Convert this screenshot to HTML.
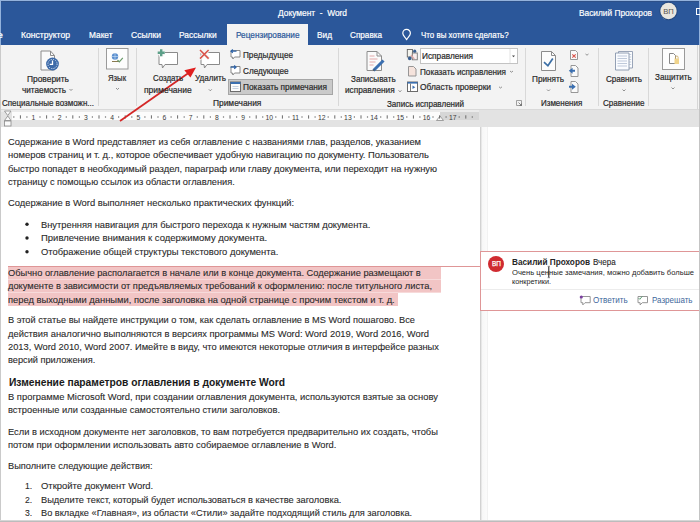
<!DOCTYPE html>
<html><head><meta charset="utf-8">
<style>
*{margin:0;padding:0;box-sizing:border-box}
html,body{width:700px;height:522px;overflow:hidden;background:#fff;font-family:"Liberation Sans",sans-serif}
.a{position:absolute}
.t{position:absolute;white-space:pre;line-height:normal;transform-origin:0 0;font-family:"Liberation Sans",sans-serif}
svg{position:absolute;overflow:visible}
</style></head><body>
<!-- title bar -->
<div class="a" style="left:0;top:0;width:700px;height:45px;background:#2b579a"></div>
<div class="a" style="left:0;top:0;width:700px;height:1px;background:#93b2dc"></div>
<div class="a" style="left:0;top:1px;width:700px;height:1px;background:#2d5088"></div>
<!-- active tab -->
<div class="a" style="left:227px;top:24px;width:81px;height:22px;background:#f3f3f3"></div>
<!-- ribbon -->
<div class="a" style="left:0;top:45px;width:700px;height:64px;background:#f3f3f3"></div>
<div class="a" style="left:0;top:109px;width:700px;height:1px;background:#d9d9d9"></div>
<!-- show comments button -->
<div class="a" style="left:228px;top:79px;width:105px;height:16px;background:#cacaca;border:1px solid #a6a6a6"></div>
<!-- separators -->
<div class="a" style="left:697px;top:45px;width:1px;height:64px;background:#d6d6d6"></div>
<div class="a" style="left:98px;top:48px;width:1px;height:58px;background:#d8d8d8"></div>
<div class="a" style="left:136px;top:48px;width:1px;height:58px;background:#d8d8d8"></div>
<div class="a" style="left:338px;top:48px;width:1px;height:58px;background:#d8d8d8"></div>
<div class="a" style="left:525px;top:48px;width:1px;height:58px;background:#d8d8d8"></div>
<div class="a" style="left:598px;top:48px;width:1px;height:58px;background:#d8d8d8"></div>
<div class="a" style="left:648px;top:48px;width:1px;height:58px;background:#d8d8d8"></div>
<!-- ruler -->
<div class="a" style="left:0;top:110px;width:700px;height:17px;background:#e3e3e3"></div>
<div class="a" style="left:0;top:110px;width:479px;height:2px;background:#ebebeb"></div>
<div class="a" style="left:12px;top:112px;width:428px;height:8px;background:#fcfcfc"></div>
<div class="a" style="left:440px;top:112px;width:39px;height:8px;background:#d6d6d6"></div>
<!-- doc -->
<div class="a" style="left:0;top:127px;width:700px;height:395px;background:#fff"></div>
<div class="a" style="left:480px;top:127px;width:8px;height:395px;background:linear-gradient(to right,#d2d2d2 0px,#d2d2d2 1px,#e8e8e8 1px,#e8e8e8 2px,#f7f7f7 2px,#fbfbfb 7px,#f2f2f2 7px,#f2f2f2 8px)"></div>
<!-- highlight -->
<div class="a" style="left:8px;top:267px;width:433px;height:12px;background:#f2c5c5"></div>
<div class="a" style="left:8px;top:279px;width:433px;height:1px;background:#f7dada"></div>
<div class="a" style="left:8px;top:280px;width:433px;height:12px;background:#f2c5c5"></div>
<div class="a" style="left:8px;top:292px;width:433px;height:1px;background:#f7dada"></div>
<div class="a" style="left:8px;top:293px;width:390px;height:13px;background:#f2c5c5"></div>
<div class="a" style="left:8px;top:266px;width:473px;height:1px;background:#df9697"></div>
<!-- comment box -->
<div class="a" style="left:480px;top:251px;width:222px;height:60px;background:#fff;border:1px solid #df9697"></div>
<div class="a" style="left:481px;top:289px;width:219px;height:1px;background:#ececec"></div>
<div class="a" style="left:488.2px;top:255.7px;width:16px;height:16px;border-radius:50%;background:#d02b30"></div>

<!-- avatar title -->
<div class="a" style="left:660px;top:4px;width:16px;height:16px;border-radius:50%;background:#dedede"></div>
<!-- borders -->
<div class="a" style="left:0;top:0;width:1px;height:45px;background:#93b2dc"></div>
<div class="a" style="left:0;top:45px;width:1px;height:477px;background:#cacaca"></div>
<div class="a" style="left:699px;top:0;width:1px;height:45px;background:#93b2dc"></div>
<div class="a" style="left:699px;top:45px;width:1px;height:477px;background:#c4c4c4"></div>
<div class="a" style="left:0;top:520px;width:700px;height:1px;background:#d6d6d6"></div>
<div class="a" style="left:0;top:521px;width:700px;height:1px;background:#bcbcbc"></div>
<svg width="700" height="522" viewBox="0 0 700 522" style="left:0;top:0">
<!-- title avatar -->
<circle cx="668.5" cy="11" r="9.2" fill="#24487f"/>
<circle cx="668.5" cy="11" r="8.2" fill="#e9e6df"/>
<text x="668.5" y="14" font-size="7.6" text-anchor="middle" fill="#55534e" font-family="Liberation Sans" style="-webkit-text-stroke:0.3px #55534e">ВП</text>
<!-- ribbon display icon at right edge -->
<rect x="696.5" y="8.5" width="5" height="6" fill="none" stroke="#ffffff" stroke-width="1"/>
<!-- lightbulb -->
<path d="M406.6 39.6 C405.2 37 402.8 35.8 402.8 33.2 A3.8 3.8 0 0 1 410.4 33.2 C410.4 35.8 408 37 406.6 39.6z" fill="none" stroke="#fff" stroke-width="1.2" stroke-linejoin="round"/>
<!-- Проверить читаемость: doc + blue circle -->
<path d="M41 51 h9.5 l4 4.5 v14.5 h-13.5z" fill="#fafafa" stroke="#8c8c8c" stroke-width="1"/>
<path d="M50.5 51 v4.5 h4" fill="none" stroke="#8c8c8c" stroke-width="1"/>
<circle cx="52.5" cy="64" r="6.4" fill="#3d6aa8"/>
<circle cx="52.5" cy="64" r="4.6" fill="none" stroke="#cfe0f3" stroke-width="1" stroke-dasharray="1.2 1.2"/>
<path d="M52.5 60.5 v3.8 h-2.8" fill="none" stroke="#ffffff" stroke-width="1.3"/>
<!-- chevron -->
<path d="M69.5 89 l1.5 1.5 l1.5 -1.5" fill="none" stroke="#777" stroke-width="0.8"/>

<!-- Язык -->
<rect x="106.5" y="48.5" width="21.5" height="20.5" fill="#fdfdfd" stroke="#9a9a9a" stroke-width="1"/>
<circle cx="115" cy="56.5" r="3.2" fill="#5b8fcf"/>
<path d="M112 56.5 h6 M115 53.3 v6.4" stroke="#cfe1f5" stroke-width="0.6"/>
<path d="M112 61.5 h8" stroke="#8a7a50" stroke-width="1"/>
<path d="M117.5 60 l1.8 1.8 l3.5 -4" fill="none" stroke="#6a9a6a" stroke-width="1.2"/>
<path d="M116 88 l1.5 1.5 l1.5 -1.5" fill="none" stroke="#777" stroke-width="0.8"/>

<!-- Создать примечание -->
<path d="M159 52.5 h18.5 v12 h-12.5 l-2.5 3.5 l-0.5 -3.5 h-3z" fill="#ffffff" stroke="#8a8a8a" stroke-width="1"/>
<path d="M161.2 49 v7.5 M157.5 52.7 h7.5" stroke="#f3f3f3" stroke-width="4.5"/>
<path d="M161.2 49.3 v7 M157.7 52.8 h7" stroke="#5c9f88" stroke-width="2.4"/>

<!-- Удалить -->
<path d="M201 52.5 h18.5 v12 h-12.5 l-2.5 3.5 l-0.5 -3.5 h-3z" fill="#ffffff" stroke="#8a8a8a" stroke-width="1"/>
<path d="M199.5 49.5 l9.5 9.5 M209 49.5 l-9.5 9.5" stroke="#f3f3f3" stroke-width="3.5"/>
<path d="M200 50 l8.6 8.6 M208.6 50 l-8.6 8.6" stroke="#d9534a" stroke-width="1.5"/>
<path d="M208.8 89.3 l1.5 1.5 l1.5 -1.5" fill="none" stroke="#777" stroke-width="0.8"/>

<!-- Предыдущее -->
<path d="M231 50.5 h9 v6.5 h-5.5 l-1.6 2 l-0.4 -2 h-1.5z" fill="#fff" stroke="#7d7d7d" stroke-width="0.9"/>
<path d="M236.5 51.2 h-5.5 M232.8 49.5 l-1.8 1.7 l1.8 1.7" fill="none" stroke="#2f64a8" stroke-width="1.2"/>
<!-- Следующее -->
<path d="M231 66.5 h9 v6.5 h-5.5 l-1.6 2 l-0.4 -2 h-1.5z" fill="#fff" stroke="#7d7d7d" stroke-width="0.9"/>
<path d="M230.5 67.2 h5.5 M234.2 65.5 l1.8 1.7 l-1.8 1.7" fill="none" stroke="#2f64a8" stroke-width="1.2"/>

<!-- Показать примечания icon -->
<rect x="230.5" y="82" width="10" height="9.5" fill="#fbfbfb" stroke="#6b6b6b" stroke-width="1"/>
<rect x="230.5" y="82" width="10" height="2" fill="#3b6fb0"/>
<path d="M232.5 86.5 h6 M232.5 88.5 h6" stroke="#b8c6da" stroke-width="0.8"/>
<!-- Записывать исправления -->
<path d="M367 51.5 h10 l4.5 4.5 v14.5 h-14.5z" fill="#fbfbfb" stroke="#8c8c8c" stroke-width="1"/>
<path d="M377 51.5 v4.5 h4.5" fill="none" stroke="#8c8c8c" stroke-width="1"/>
<path d="M369.5 56 h5 M369.5 59 h8 M369.5 62 h6 M369.5 65 h4" stroke="#e0a0a0" stroke-width="0.9"/>
<path d="M373.5 70.5 l10 -10" stroke="#3b6fb0" stroke-width="3"/>
<path d="M372.8 71.3 l1.2 -2.4 l1.2 1.2z" fill="#555"/>
<path d="M398.5 90.5 l1.5 1.2 l1.5 -1.2" fill="none" stroke="#777" stroke-width="0.8"/>

<!-- small icon 1 (display for review) -->
<rect x="407.3" y="49.5" width="5.2" height="7.5" fill="#f4f4ee" stroke="#666" stroke-width="0.9"/>
<rect x="412.3" y="53" width="5" height="6.8" fill="#f8eeee" stroke="#777" stroke-width="0.9"/>
<path d="M411 55 l3.3 4" stroke="#e0a8a8" stroke-width="1.2"/>
<circle cx="414.7" cy="51.2" r="1.6" fill="#3a5f90"/>
<circle cx="409.7" cy="58.4" r="1.8" fill="#3a5f90"/>
<!-- dropdown -->
<rect x="420.5" y="48.5" width="97" height="15" fill="#ffffff" stroke="#c3c3c3" stroke-width="1"/>
<rect x="509.5" y="49" width="1" height="14" fill="#e3e3e3"/>
<path d="M512 55.5 h3 l-1.5 1.7z" fill="#444"/>
<!-- small icon 2 -->
<path d="M408.5 66.5 h5 l2.5 2.5 v7 h-7.5z" fill="#f5e3dc" stroke="#8c8c8c" stroke-width="0.9"/>
<path d="M510 71 l1.5 1.2 l1.5 -1.2" fill="none" stroke="#777" stroke-width="0.8"/>
<!-- small icon 3 -->
<rect x="407.5" y="82" width="10" height="9.5" fill="#fff" stroke="#6b6b6b" stroke-width="1"/>
<rect x="407.5" y="82" width="10" height="1.6" fill="#3b6fb0"/>
<path d="M410.5 83.5 v8" stroke="#6b6b6b" stroke-width="0.9"/>
<path d="M412.5 85.5 l2.8 1.8 l-2.8 1.8z" fill="#3b6fb0"/>
<path d="M499 86.8 l1.5 1.2 l1.5 -1.2" fill="none" stroke="#777" stroke-width="0.8"/>
<!-- dialog launcher -->
<path d="M516.5 100.5 h5 v5 h-5z" fill="none" stroke="#8a8a8a" stroke-width="0.8"/>
<path d="M518.5 102.5 l3 3 M519.5 105.5 h2 v-2" fill="none" stroke="#6a6a6a" stroke-width="0.8"/>

<!-- Принять -->
<path d="M541.5 51.5 h10 l4 4 v15 h-14z" fill="#fcfcfc" stroke="#8c8c8c" stroke-width="1"/>
<path d="M551.5 51.5 v4 h4" fill="none" stroke="#8c8c8c" stroke-width="1"/>
<path d="M544 62.2 l3.9 3.6 l4.9 -7.2" fill="none" stroke="#3b6ea5" stroke-width="1.7"/>
<path d="M547 89.5 l1.5 1.5 l1.5 -1.5" fill="none" stroke="#777" stroke-width="0.8"/>
<!-- small: reject -->
<path d="M570.5 50.5 h5 l2 2 v7 h-7z" fill="#fafafa" stroke="#8c8c8c" stroke-width="0.9"/>
<path d="M572.3 54.3 l3.4 3.4 M575.7 54.3 l-3.4 3.4" stroke="#d9534a" stroke-width="1.1"/>
<path d="M585.5 54 l1.5 1.2 l1.5 -1.2" fill="none" stroke="#777" stroke-width="0.8"/>
<!-- small: prev change -->
<path d="M571 65.5 h4.5 l2.5 2.5 v8.5 h-7z" fill="#fafafa" stroke="#8c8c8c" stroke-width="0.9"/>
<path d="M568.8 70.8 L572.6 67.8 V69.8 H575 V71.8 H572.6 V73.8z" fill="#3b6fb0"/>
<!-- small: next change -->
<path d="M571 81.5 h4.5 l2.5 2.5 v8.5 h-7z" fill="#fafafa" stroke="#8c8c8c" stroke-width="0.9"/>
<path d="M575.8 86.8 L572 83.8 V85.8 H569 V87.8 H572 V89.8z" fill="#3b6fb0"/>

<!-- Сравнить -->
<path d="M618.5 51.5 h14 v16.5 h-14z" fill="#fbfcfe" stroke="#8f9bb0" stroke-width="0.9"/>
<path d="M629.2 54.5 h2 M629.2 57 h2 M629.2 59.5 h2 M629.2 62 h2 M629.2 64.5 h2" stroke="#9fb0c8" stroke-width="0.6"/>
<path d="M615.5 53 h13.5 v17 h-13.5z" fill="#fafcff" stroke="#8795ab" stroke-width="0.9"/>
<path d="M617.5 56 h9.5 M617.5 58.5 h9.5 M617.5 61 h9.5 M617.5 63.5 h9.5 M617.5 66 h9.5" stroke="#a3b3ca" stroke-width="0.7"/>
<path d="M622.5 89.5 l1.5 1.5 l1.5 -1.5" fill="none" stroke="#777" stroke-width="0.8"/>

<!-- Защитить -->
<rect x="662.5" y="48.5" width="22" height="21" fill="#fdfdfd" stroke="#9a9a9a" stroke-width="1"/>
<path d="M669.5 53.5 h4 l2 2 v8 h-6z" fill="#fff" stroke="#7a7a7a" stroke-width="0.9"/>
<rect x="674.5" y="58.5" width="4.5" height="5.5" fill="#f0d48c"/>
<path d="M675.5 58.5 v-1.2 a1.3 1.3 0 0 1 2.6 0 v1.2" fill="none" stroke="#c8a45c" stroke-width="0.8"/>
<path d="M671.5 87.5 l1.5 1.5 l1.5 -1.5" fill="none" stroke="#777" stroke-width="0.8"/>

<!-- ruler indent markers -->
<path d="M4.5 111 h6.5 l-3.25 4.5z M4.5 120.5 h6.5 l-3.25 -4.5z" fill="#fafafa" stroke="#8a8a8a" stroke-width="0.8"/>
<rect x="4.5" y="121" width="6.5" height="5" fill="#fafafa" stroke="#8a8a8a" stroke-width="0.8"/>
<path d="M436.5 120.5 h7 l-3.5 -4.5z" fill="#fafafa" stroke="#8a8a8a" stroke-width="0.8"/>
<rect x="13.2" y="116.4" width="1.2" height="1.2" fill="#6a6a6a"/>
<rect x="19.9" y="115.3" width="1" height="3.3" fill="#6a6a6a"/>
<rect x="26.3" y="116.4" width="1.2" height="1.2" fill="#6a6a6a"/>
<text x="33.5" y="119.8" font-size="6.8" text-anchor="middle" fill="#3a3a3a" font-family="Liberation Sans" style="-webkit-text-stroke:0.2px #3a3a3a">1</text>
<rect x="39.4" y="116.4" width="1.2" height="1.2" fill="#6a6a6a"/>
<rect x="46.1" y="115.3" width="1" height="3.3" fill="#6a6a6a"/>
<rect x="52.5" y="116.4" width="1.2" height="1.2" fill="#6a6a6a"/>
<text x="59.7" y="119.8" font-size="6.8" text-anchor="middle" fill="#3a3a3a" font-family="Liberation Sans" style="-webkit-text-stroke:0.2px #3a3a3a">2</text>
<rect x="65.7" y="116.4" width="1.2" height="1.2" fill="#6a6a6a"/>
<rect x="72.3" y="115.3" width="1" height="3.3" fill="#6a6a6a"/>
<rect x="78.8" y="116.4" width="1.2" height="1.2" fill="#6a6a6a"/>
<text x="85.9" y="119.8" font-size="6.8" text-anchor="middle" fill="#3a3a3a" font-family="Liberation Sans" style="-webkit-text-stroke:0.2px #3a3a3a">3</text>
<rect x="91.8" y="116.4" width="1.2" height="1.2" fill="#6a6a6a"/>
<rect x="98.5" y="115.3" width="1" height="3.3" fill="#6a6a6a"/>
<rect x="104.9" y="116.4" width="1.2" height="1.2" fill="#6a6a6a"/>
<text x="112.1" y="119.8" font-size="6.8" text-anchor="middle" fill="#3a3a3a" font-family="Liberation Sans" style="-webkit-text-stroke:0.2px #3a3a3a">4</text>
<rect x="118.0" y="116.4" width="1.2" height="1.2" fill="#6a6a6a"/>
<rect x="124.7" y="115.3" width="1" height="3.3" fill="#6a6a6a"/>
<rect x="131.2" y="116.4" width="1.2" height="1.2" fill="#6a6a6a"/>
<text x="138.3" y="119.8" font-size="6.8" text-anchor="middle" fill="#3a3a3a" font-family="Liberation Sans" style="-webkit-text-stroke:0.2px #3a3a3a">5</text>
<rect x="144.3" y="116.4" width="1.2" height="1.2" fill="#6a6a6a"/>
<rect x="150.9" y="115.3" width="1" height="3.3" fill="#6a6a6a"/>
<rect x="157.4" y="116.4" width="1.2" height="1.2" fill="#6a6a6a"/>
<text x="164.5" y="119.8" font-size="6.8" text-anchor="middle" fill="#3a3a3a" font-family="Liberation Sans" style="-webkit-text-stroke:0.2px #3a3a3a">6</text>
<rect x="170.5" y="116.4" width="1.2" height="1.2" fill="#6a6a6a"/>
<rect x="177.1" y="115.3" width="1" height="3.3" fill="#6a6a6a"/>
<rect x="183.6" y="116.4" width="1.2" height="1.2" fill="#6a6a6a"/>
<text x="190.7" y="119.8" font-size="6.8" text-anchor="middle" fill="#3a3a3a" font-family="Liberation Sans" style="-webkit-text-stroke:0.2px #3a3a3a">7</text>
<rect x="196.7" y="116.4" width="1.2" height="1.2" fill="#6a6a6a"/>
<rect x="203.3" y="115.3" width="1" height="3.3" fill="#6a6a6a"/>
<rect x="209.8" y="116.4" width="1.2" height="1.2" fill="#6a6a6a"/>
<text x="216.9" y="119.8" font-size="6.8" text-anchor="middle" fill="#3a3a3a" font-family="Liberation Sans" style="-webkit-text-stroke:0.2px #3a3a3a">8</text>
<rect x="222.9" y="116.4" width="1.2" height="1.2" fill="#6a6a6a"/>
<rect x="229.5" y="115.3" width="1" height="3.3" fill="#6a6a6a"/>
<rect x="236.0" y="116.4" width="1.2" height="1.2" fill="#6a6a6a"/>
<text x="243.1" y="119.8" font-size="6.8" text-anchor="middle" fill="#3a3a3a" font-family="Liberation Sans" style="-webkit-text-stroke:0.2px #3a3a3a">9</text>
<rect x="249.1" y="116.4" width="1.2" height="1.2" fill="#6a6a6a"/>
<rect x="255.7" y="115.3" width="1" height="3.3" fill="#6a6a6a"/>
<rect x="262.1" y="116.4" width="1.2" height="1.2" fill="#6a6a6a"/>
<text x="269.3" y="119.8" font-size="6.8" text-anchor="middle" fill="#3a3a3a" font-family="Liberation Sans" style="-webkit-text-stroke:0.2px #3a3a3a">10</text>
<rect x="275.2" y="116.4" width="1.2" height="1.2" fill="#6a6a6a"/>
<rect x="281.9" y="115.3" width="1" height="3.3" fill="#6a6a6a"/>
<rect x="288.3" y="116.4" width="1.2" height="1.2" fill="#6a6a6a"/>
<text x="295.5" y="119.8" font-size="6.8" text-anchor="middle" fill="#3a3a3a" font-family="Liberation Sans" style="-webkit-text-stroke:0.2px #3a3a3a">11</text>
<rect x="301.4" y="116.4" width="1.2" height="1.2" fill="#6a6a6a"/>
<rect x="308.1" y="115.3" width="1" height="3.3" fill="#6a6a6a"/>
<rect x="314.5" y="116.4" width="1.2" height="1.2" fill="#6a6a6a"/>
<text x="321.7" y="119.8" font-size="6.8" text-anchor="middle" fill="#3a3a3a" font-family="Liberation Sans" style="-webkit-text-stroke:0.2px #3a3a3a">12</text>
<rect x="327.6" y="116.4" width="1.2" height="1.2" fill="#6a6a6a"/>
<rect x="334.3" y="115.3" width="1" height="3.3" fill="#6a6a6a"/>
<rect x="340.7" y="116.4" width="1.2" height="1.2" fill="#6a6a6a"/>
<text x="347.9" y="119.8" font-size="6.8" text-anchor="middle" fill="#3a3a3a" font-family="Liberation Sans" style="-webkit-text-stroke:0.2px #3a3a3a">13</text>
<rect x="353.8" y="116.4" width="1.2" height="1.2" fill="#6a6a6a"/>
<rect x="360.5" y="115.3" width="1" height="3.3" fill="#6a6a6a"/>
<rect x="366.9" y="116.4" width="1.2" height="1.2" fill="#6a6a6a"/>
<text x="374.1" y="119.8" font-size="6.8" text-anchor="middle" fill="#3a3a3a" font-family="Liberation Sans" style="-webkit-text-stroke:0.2px #3a3a3a">14</text>
<rect x="380.1" y="116.4" width="1.2" height="1.2" fill="#6a6a6a"/>
<rect x="386.7" y="115.3" width="1" height="3.3" fill="#6a6a6a"/>
<rect x="393.1" y="116.4" width="1.2" height="1.2" fill="#6a6a6a"/>
<text x="400.3" y="119.8" font-size="6.8" text-anchor="middle" fill="#3a3a3a" font-family="Liberation Sans" style="-webkit-text-stroke:0.2px #3a3a3a">15</text>
<rect x="406.2" y="116.4" width="1.2" height="1.2" fill="#6a6a6a"/>
<rect x="412.9" y="115.3" width="1" height="3.3" fill="#6a6a6a"/>
<rect x="419.3" y="116.4" width="1.2" height="1.2" fill="#6a6a6a"/>
<text x="426.5" y="119.8" font-size="6.8" text-anchor="middle" fill="#3a3a3a" font-family="Liberation Sans" style="-webkit-text-stroke:0.2px #3a3a3a">16</text>
<rect x="432.4" y="116.4" width="1.2" height="1.2" fill="#6a6a6a"/>
<rect x="439.1" y="115.3" width="1" height="3.3" fill="#6a6a6a"/>
<rect x="445.5" y="116.4" width="1.2" height="1.2" fill="#6a6a6a"/>
<text x="452.7" y="119.8" font-size="6.8" text-anchor="middle" fill="#3a3a3a" font-family="Liberation Sans" style="-webkit-text-stroke:0.2px #3a3a3a">17</text>
<rect x="458.6" y="116.4" width="1.2" height="1.2" fill="#6a6a6a"/>
<rect x="465.3" y="115.3" width="1" height="3.3" fill="#6a6a6a"/>
<rect x="471.7" y="116.4" width="1.2" height="1.2" fill="#6a6a6a"/>

<!-- bullets -->
<circle cx="27" cy="224.3" r="1.7" fill="#222"/>
<circle cx="27" cy="238" r="1.7" fill="#222"/>
<circle cx="27" cy="251.8" r="1.7" fill="#222"/>

<!-- red arrow -->
<line x1="120" y1="121" x2="188.5" y2="73" stroke="#d42727" stroke-width="1.8"/>
<path d="M196 67.6 L184.3 70.2 L190.4 77.5z" fill="#e01f1f"/>

<!-- comment icons -->
<path d="M581 296.5 h9.2 v6.2 h-5.2 l-2.2 2.2 v-2.2 h-1.8z" fill="none" stroke="#8a8a8a" stroke-width="0.9"/>
<circle cx="581.3" cy="297" r="1.6" fill="#7b3fa0"/>
<path d="M638 296.5 h9.5 v6.2 h-5.2 l-2.2 2.2 v-2.2 h-2.1z" fill="none" stroke="#8a8a8a" stroke-width="0.9"/>
<path d="M638.5 298 l1.3 1.3 l2.5 -3" fill="none" stroke="#4f9a6a" stroke-width="0.9"/>
<!-- I-beam cursor -->
<path d="M548.8 266.5 v11" stroke="#1a1a1a" stroke-width="1"/>
<path d="M547.6 266.3 h2.4 M547.6 277.7 h2.4" stroke="#555" stroke-width="0.6"/>
</svg>

<div class="t" style="left:278.00px;top:8px;font-size:9.2px;color:#ffffff;transform:scaleX(0.9101);-webkit-text-stroke:0.2px #ffffff;">Документ  -  Word</div>
<div class="t" style="left:579.00px;top:8px;font-size:9.0px;color:#ffffff;transform:scaleX(0.9250);-webkit-text-stroke:0.2px #ffffff;">Василий Прохоров</div>
<div class="t" style="left:-4.00px;top:30px;font-size:8.6px;color:#ffffff;transform:scaleX(1.4641);-webkit-text-stroke:0.2px #ffffff;">е</div>
<div class="t" style="left:21.00px;top:30px;font-size:8.6px;color:#ffffff;transform:scaleX(1.0000);-webkit-text-stroke:0.2px #ffffff;">Конструктор</div>
<div class="t" style="left:88.50px;top:30px;font-size:8.6px;color:#ffffff;transform:scaleX(0.9660);-webkit-text-stroke:0.2px #ffffff;">Макет</div>
<div class="t" style="left:130.50px;top:30px;font-size:8.6px;color:#ffffff;transform:scaleX(0.9912);-webkit-text-stroke:0.2px #ffffff;">Ссылки</div>
<div class="t" style="left:179.00px;top:30px;font-size:8.6px;color:#ffffff;transform:scaleX(0.9772);-webkit-text-stroke:0.2px #ffffff;">Рассылки</div>
<div class="t" style="left:235.50px;top:30px;font-size:8.6px;color:#2b579a;transform:scaleX(0.9569);-webkit-text-stroke:0.2px #2b579a;">Рецензирование</div>
<div class="t" style="left:317.00px;top:30px;font-size:8.6px;color:#ffffff;transform:scaleX(0.9648);-webkit-text-stroke:0.2px #ffffff;">Вид</div>
<div class="t" style="left:350.00px;top:30px;font-size:8.6px;color:#ffffff;transform:scaleX(0.9490);-webkit-text-stroke:0.2px #ffffff;">Справка</div>
<div class="t" style="left:420.70px;top:30px;font-size:8.6px;color:#ffffff;transform:scaleX(0.9220);-webkit-text-stroke:0.2px #ffffff;">Что вы хотите сделать?</div>
<div class="t" style="left:27.00px;top:74px;font-size:8.4px;color:#2a2a2a;transform:scaleX(1.0026);-webkit-text-stroke:0.2px #2a2a2a;">Проверить</div>
<div class="t" style="left:22.00px;top:85px;font-size:8.4px;color:#2a2a2a;transform:scaleX(0.9798);-webkit-text-stroke:0.2px #2a2a2a;">читаемость</div>
<div class="t" style="left:2.00px;top:98px;font-size:8.4px;color:#2a2a2a;transform:scaleX(0.9529);-webkit-text-stroke:0.2px #2a2a2a;">Специальные возможн...</div>
<div class="t" style="left:108.00px;top:73px;font-size:8.4px;color:#2a2a2a;transform:scaleX(0.9194);-webkit-text-stroke:0.2px #2a2a2a;">Язык</div>
<div class="t" style="left:153.00px;top:73px;font-size:8.4px;color:#2a2a2a;transform:scaleX(0.9426);-webkit-text-stroke:0.2px #2a2a2a;">Создать</div>
<div class="t" style="left:143.60px;top:85px;font-size:8.4px;color:#2a2a2a;transform:scaleX(1.0170);-webkit-text-stroke:0.2px #2a2a2a;">примечание</div>
<div class="t" style="left:195.00px;top:73px;font-size:8.4px;color:#2a2a2a;transform:scaleX(0.9692);-webkit-text-stroke:0.2px #2a2a2a;">Удалить</div>
<div class="t" style="left:243.00px;top:50px;font-size:8.4px;color:#2a2a2a;transform:scaleX(0.9756);-webkit-text-stroke:0.2px #2a2a2a;">Предыдущее</div>
<div class="t" style="left:243.00px;top:66px;font-size:8.4px;color:#2a2a2a;transform:scaleX(0.9725);-webkit-text-stroke:0.2px #2a2a2a;">Следующее</div>
<div class="t" style="left:243.00px;top:82px;font-size:8.4px;color:#2a2a2a;transform:scaleX(0.9906);-webkit-text-stroke:0.2px #2a2a2a;">Показать примечания</div>
<div class="t" style="left:213.00px;top:98px;font-size:8.4px;color:#2a2a2a;transform:scaleX(1.0008);-webkit-text-stroke:0.2px #2a2a2a;">Примечания</div>
<div class="t" style="left:351.40px;top:74px;font-size:8.4px;color:#2a2a2a;transform:scaleX(0.9660);-webkit-text-stroke:0.2px #2a2a2a;">Записывать</div>
<div class="t" style="left:345.40px;top:85px;font-size:8.4px;color:#2a2a2a;transform:scaleX(0.9849);-webkit-text-stroke:0.2px #2a2a2a;">исправления</div>
<div class="t" style="left:387.40px;top:99px;font-size:8.4px;color:#2a2a2a;transform:scaleX(0.9588);-webkit-text-stroke:0.2px #2a2a2a;">Запись исправлений</div>
<div class="t" style="left:422.00px;top:51px;font-size:8.4px;color:#2a2a2a;transform:scaleX(0.9864);-webkit-text-stroke:0.2px #2a2a2a;">Исправления</div>
<div class="t" style="left:420.00px;top:67px;font-size:8.4px;color:#2a2a2a;transform:scaleX(0.9740);-webkit-text-stroke:0.2px #2a2a2a;">Показать исправления</div>
<div class="t" style="left:420.00px;top:82px;font-size:8.4px;color:#2a2a2a;transform:scaleX(0.9991);-webkit-text-stroke:0.2px #2a2a2a;">Область проверки</div>
<div class="t" style="left:532.00px;top:74px;font-size:8.4px;color:#2a2a2a;transform:scaleX(0.9780);-webkit-text-stroke:0.2px #2a2a2a;">Принять</div>
<div class="t" style="left:540.70px;top:98px;font-size:8.4px;color:#2a2a2a;transform:scaleX(0.9515);-webkit-text-stroke:0.2px #2a2a2a;">Изменения</div>
<div class="t" style="left:605.50px;top:74px;font-size:8.4px;color:#2a2a2a;transform:scaleX(0.9644);-webkit-text-stroke:0.2px #2a2a2a;">Сравнить</div>
<div class="t" style="left:603.00px;top:98px;font-size:8.4px;color:#2a2a2a;transform:scaleX(0.9637);-webkit-text-stroke:0.2px #2a2a2a;">Сравнение</div>
<div class="t" style="left:655.00px;top:72px;font-size:8.4px;color:#2a2a2a;transform:scaleX(0.9658);-webkit-text-stroke:0.2px #2a2a2a;">Защитить</div>
<div class="t" style="left:8.00px;top:136px;font-size:9.6px;color:#2a2a2a;transform:scaleX(0.9686);-webkit-text-stroke:0.1px #2a2a2a;">Содержание в Word представляет из себя оглавление с названиями глав, разделов, указанием</div>
<div class="t" style="left:8.00px;top:149px;font-size:9.6px;color:#2a2a2a;transform:scaleX(0.9812);-webkit-text-stroke:0.1px #2a2a2a;">номеров страниц и т. д., которое обеспечивает удобную навигацию по документу. Пользователь</div>
<div class="t" style="left:8.00px;top:163px;font-size:9.6px;color:#2a2a2a;transform:scaleX(0.9756);-webkit-text-stroke:0.1px #2a2a2a;">быстро попадет в необходимый раздел, параграф или главу документа, или переходит на нужную</div>
<div class="t" style="left:8.00px;top:176px;font-size:9.6px;color:#2a2a2a;transform:scaleX(0.9634);-webkit-text-stroke:0.1px #2a2a2a;">страницу с помощью ссылок из области оглавления.</div>
<div class="t" style="left:8.00px;top:197px;font-size:9.6px;color:#2a2a2a;transform:scaleX(0.9762);-webkit-text-stroke:0.1px #2a2a2a;">Содержание в Word выполняет несколько практических функций:</div>
<div class="t" style="left:41.40px;top:219px;font-size:9.6px;color:#2a2a2a;transform:scaleX(0.9713);-webkit-text-stroke:0.1px #2a2a2a;">Внутренняя навигация для быстрого перехода к нужным частям документа.</div>
<div class="t" style="left:41.40px;top:232px;font-size:9.6px;color:#2a2a2a;transform:scaleX(0.9888);-webkit-text-stroke:0.1px #2a2a2a;">Привлечение внимания к содержимому документа.</div>
<div class="t" style="left:41.40px;top:246px;font-size:9.6px;color:#2a2a2a;transform:scaleX(0.9779);-webkit-text-stroke:0.1px #2a2a2a;">Отображение общей структуры текстового документа.</div>
<div class="t" style="left:8.00px;top:267px;font-size:9.6px;color:#2a2a2a;transform:scaleX(0.9670);-webkit-text-stroke:0.1px #2a2a2a;">Обычно оглавление располагается в начале или в конце документа. Содержание размещают в</div>
<div class="t" style="left:8.00px;top:280px;font-size:9.6px;color:#2a2a2a;transform:scaleX(0.9688);-webkit-text-stroke:0.1px #2a2a2a;">документе в зависимости от предъявляемых требований к оформлению: после титульного листа,</div>
<div class="t" style="left:8.00px;top:294px;font-size:9.6px;color:#2a2a2a;transform:scaleX(0.9748);-webkit-text-stroke:0.1px #2a2a2a;">перед выходными данными, после заголовка на одной странице с прочим текстом и т. д.</div>
<div class="t" style="left:8.00px;top:314px;font-size:9.6px;color:#2a2a2a;transform:scaleX(0.9633);-webkit-text-stroke:0.1px #2a2a2a;">В этой статье вы найдете инструкции о том, как сделать оглавление в MS Word пошагово. Все</div>
<div class="t" style="left:8.00px;top:328px;font-size:9.6px;color:#2a2a2a;transform:scaleX(0.9759);-webkit-text-stroke:0.1px #2a2a2a;">действия аналогично выполняются в версиях программы MS Word: Word 2019, Word 2016, Word</div>
<div class="t" style="left:8.00px;top:341px;font-size:9.6px;color:#2a2a2a;transform:scaleX(0.9707);-webkit-text-stroke:0.1px #2a2a2a;">2013, Word 2010, Word 2007. Имейте в виду, что имеются некоторые отличия в интерфейсе разных</div>
<div class="t" style="left:8.00px;top:354px;font-size:9.6px;color:#2a2a2a;transform:scaleX(0.9600);-webkit-text-stroke:0.1px #2a2a2a;">версий приложения.</div>
<div class="t" style="left:8.60px;top:376px;font-size:10.75px;color:#1a1a1a;font-weight:bold;transform:scaleX(0.9541);-webkit-text-stroke:0.05px #1a1a1a;">Изменение параметров оглавления в документе Word</div>
<div class="t" style="left:8.00px;top:391px;font-size:9.6px;color:#2a2a2a;transform:scaleX(0.9787);-webkit-text-stroke:0.1px #2a2a2a;">В программе Microsoft Word, при создании оглавления документа, используются взятые за основу</div>
<div class="t" style="left:8.00px;top:404px;font-size:9.6px;color:#2a2a2a;transform:scaleX(0.9709);-webkit-text-stroke:0.1px #2a2a2a;">встроенные или созданные самостоятельно стили заголовков.</div>
<div class="t" style="left:8.00px;top:426px;font-size:9.6px;color:#2a2a2a;transform:scaleX(0.9698);-webkit-text-stroke:0.1px #2a2a2a;">Если в исходном документе нет заголовков, то вам потребуется предварительно их создать, чтобы</div>
<div class="t" style="left:8.00px;top:439px;font-size:9.6px;color:#2a2a2a;transform:scaleX(0.9731);-webkit-text-stroke:0.1px #2a2a2a;">потом при оформлении использовать авто собираемое оглавление в Word.</div>
<div class="t" style="left:8.00px;top:460px;font-size:9.6px;color:#2a2a2a;transform:scaleX(0.9619);-webkit-text-stroke:0.1px #2a2a2a;">Выполните следующие действия:</div>
<div class="t" style="left:24.70px;top:480px;font-size:9.6px;color:#2a2a2a;transform:scaleX(0.8982);-webkit-text-stroke:0.1px #2a2a2a;">1.</div>
<div class="t" style="left:24.70px;top:494px;font-size:9.6px;color:#2a2a2a;transform:scaleX(0.8982);-webkit-text-stroke:0.1px #2a2a2a;">2.</div>
<div class="t" style="left:24.70px;top:507px;font-size:9.6px;color:#2a2a2a;transform:scaleX(0.8982);-webkit-text-stroke:0.1px #2a2a2a;">3.</div>
<div class="t" style="left:41.00px;top:480px;font-size:9.6px;color:#2a2a2a;transform:scaleX(0.9841);-webkit-text-stroke:0.1px #2a2a2a;">Откройте документ Word.</div>
<div class="t" style="left:41.00px;top:494px;font-size:9.6px;color:#2a2a2a;transform:scaleX(0.9670);-webkit-text-stroke:0.1px #2a2a2a;">Выделите текст, который будет использоваться в качестве заголовка.</div>
<div class="t" style="left:41.00px;top:507px;font-size:9.6px;color:#2a2a2a;transform:scaleX(0.9595);-webkit-text-stroke:0.1px #2a2a2a;">Во вкладке «Главная», из области «Стили» задайте подходящий стиль для заголовка.</div>
<div class="t" style="left:492.00px;top:259px;font-size:7.6px;color:#ffffff;transform:scaleX(0.8546);-webkit-text-stroke:0.25px #ffffff;">ВП</div>
<div class="t" style="left:512.00px;top:258px;font-size:8.2px;color:#262626;font-weight:bold;transform:scaleX(1.0042);-webkit-text-stroke:0px #262626;">Василий Прохоров</div>
<div class="t" style="left:593.00px;top:257px;font-size:8.3px;color:#262626;transform:scaleX(0.9685);-webkit-text-stroke:0.1px #262626;">Вчера</div>
<div class="t" style="left:512.00px;top:268px;font-size:8.0px;color:#262626;transform:scaleX(0.9502);-webkit-text-stroke:0px #262626;">Очень ценные замечания, можно добавить больше</div>
<div class="t" style="left:512.00px;top:277px;font-size:8.0px;color:#262626;transform:scaleX(0.9086);-webkit-text-stroke:0px #262626;">конкретики.</div>
<div class="t" style="left:593.20px;top:296px;font-size:8.2px;color:#41679c;transform:scaleX(0.9886);-webkit-text-stroke:0px #41679c;">Ответить</div>
<div class="t" style="left:651.50px;top:296px;font-size:8.2px;color:#41679c;transform:scaleX(0.9766);-webkit-text-stroke:0px #41679c;">Разрешать</div>
</body></html>
